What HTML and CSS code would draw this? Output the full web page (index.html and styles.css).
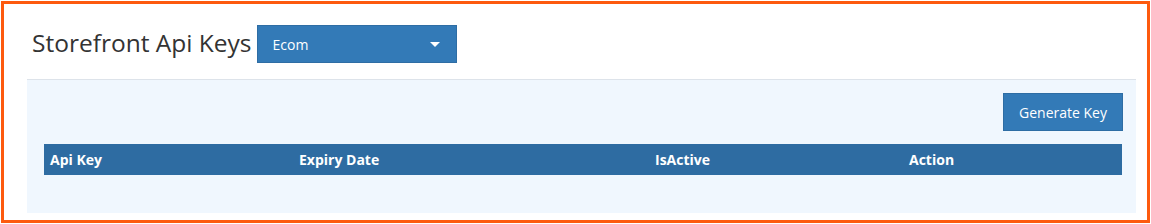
FILE: index.html
```html
<!DOCTYPE html>
<html>
<head>
<meta charset="utf-8">
<link rel="stylesheet" href="styles.css">
</head>
<body>
<div class="frame">
  <div class="header">
    <h1 class="title">Storefront Api Keys</h1>
    <div class="select">
      <span>Ecom</span>
      <span class="caret"></span>
    </div>
  </div>
  <div class="panel">
    <div class="toolbar">
      <button class="btn">Generate Key</button>
    </div>
    <div class="table">
      <div class="th c1">Api Key</div>
      <div class="th c2">Expiry Date</div>
      <div class="th c3">IsActive</div>
      <div class="th c4">Action</div>
    </div>
  </div>
</div>
</body>
</html>
```
FILE: styles.css
```css
* { box-sizing: border-box; }
body {
  margin: 0;
  padding: 1px;
  background: #fff;
  font-family: "Open Sans", "Noto Sans", sans-serif;
}
.frame {
  width: 1149px;
  height: 222px;
  border: 3px solid #fd5a0e;
  background: #fff;
  padding: 21px 11px 0 23px;
}
.header {
  display: flex;
  align-items: center;
  height: 38px;
  margin-bottom: 16px;
}
.title {
  margin: 0 5px 0 5px;
  font-size: 24.5px;
  font-weight: 400;
  color: #333;
  position: relative;
  top: -2px;
  white-space: nowrap;
}
.select {
  width: 200px;
  height: 38px;
  background: #337ab7;
  border: 1px solid #2e6da4;
  color: #fff;
  font-size: 14px;
  display: flex;
  align-items: center;
  justify-content: space-between;
  padding: 0 16px 0 15px;
}
.caret {
  width: 0;
  height: 0;
  border-left: 5px solid transparent;
  border-right: 5px solid transparent;
  border-top: 5px solid #fff;
}
.panel {
  height: 134px;
  background: #f0f7fe;
  border-top: 1px solid #dde3ea;
  padding: 13px 13px 0 17px;
}
.toolbar {
  display: flex;
  justify-content: flex-end;
  margin-bottom: 13px;
}
.btn {
  width: 120px;
  height: 38px;
  background: #337ab7;
  border: 1px solid #2e6da4;
  color: #fff;
  font-family: inherit;
  font-size: 14px;
  padding: 0;
}
.table {
  display: flex;
  width: 1078px;
  height: 31px;
  background: #2e6ca2;
}
.th {
  color: #fff;
  font-weight: 700;
  font-size: 14px;
  line-height: 31px;
  padding-left: 6px;
}
.c1 { width: 249px; }
.c2 { width: 356px; }
.c3 { width: 254px; }
.c4 { width: 219px; }
```
